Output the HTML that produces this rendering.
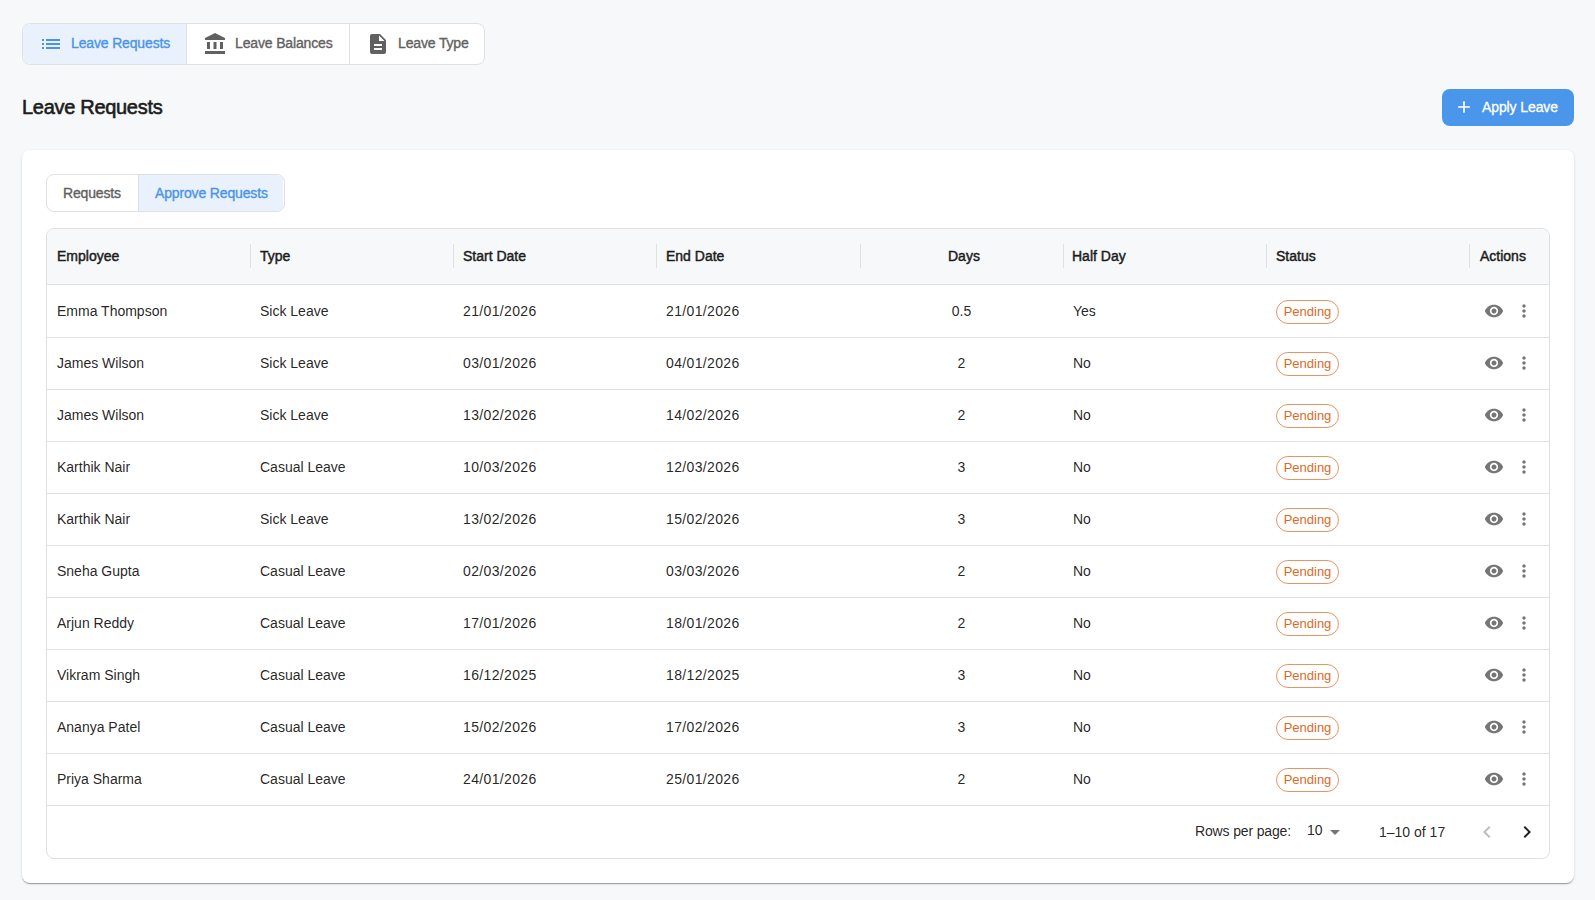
<!DOCTYPE html>
<html>
<head>
<meta charset="utf-8">
<style>
*{box-sizing:border-box;margin:0;padding:0}
html,body{width:1595px;height:900px;overflow:hidden}
body{background:#f7f8fa;font-family:"Liberation Sans",sans-serif;color:rgba(0,0,0,0.87);position:relative}
.abs{position:absolute}
svg{display:block}
/* top toggle group */
.tg{position:absolute;left:22px;top:23px;height:42px;width:463px;border:1px solid #e0e0e0;border-radius:8px;background:#fff;overflow:hidden;display:flex}
.tg .b{position:relative;flex:none;height:40px;font-size:14px;color:#616161;-webkit-text-stroke:0.35px currentColor;letter-spacing:-0.15px}
.tg .b.sel{background:#e8f1fc;color:#4a94e8}
.tg .b+.b{border-left:1px solid #e0e0e0}
.title{position:absolute;left:22px;top:94px;font-size:20px;color:#1c1c1c;-webkit-text-stroke:0.6px #1c1c1c;letter-spacing:-0.3px;line-height:26px}
.apply{position:absolute;left:1442px;top:89px;width:132px;height:37px;background:#4a96ea;border-radius:8px;color:#fff;font-size:14px;-webkit-text-stroke:0.3px #fff}
.card{position:absolute;left:22px;top:150px;width:1552px;height:733px;background:#fff;border-radius:8px;box-shadow:0px 2px 1px -1px rgba(0,0,0,0.2),0px 1px 1px 0px rgba(0,0,0,0.14),0px 1px 3px 0px rgba(0,0,0,0.12)}
.tabs{position:absolute;left:46px;top:174px;width:239px;height:38px;border:1px solid #e0e0e0;border-radius:8px;overflow:hidden;display:flex;background:#fff}
.tabs .b{flex:none;height:36px;display:flex;align-items:center;font-size:14px;color:#616161;-webkit-text-stroke:0.35px currentColor;letter-spacing:-0.15px}
.tabs .b.sel{background:#e8f1fc;color:#4a94e8}
.tabs .b+.b{border-left:1px solid #e0e0e0}
.grid{position:absolute;left:46px;top:228px;width:1504px;height:631px;border:1px solid #e0e0e0;border-radius:8px;overflow:hidden;background:#fff}
.hdr{position:absolute;left:0;top:0;width:1502px;height:56px;background:#f7f8fa;border-bottom:1px solid #e0e0e0}
.hc{position:absolute;top:0;height:55px;line-height:55px;font-size:14px;color:#1c1c1c;-webkit-text-stroke:0.45px #1c1c1c;white-space:nowrap}
.sep{position:absolute;top:15px;width:1px;height:24px;background:#e0e0e0}
.row{position:absolute;left:0;width:1502px;height:52px;border-top:1px solid #e0e0e0}
.row.first{border-top-color:transparent}
.d{letter-spacing:0.35px}
.c{position:absolute;top:-1px;height:52px;line-height:52px;font-size:14px;color:rgba(0,0,0,0.87);white-space:nowrap}
.chip{position:absolute;left:1229px;top:14px;width:63px;height:24px;border:1px solid rgba(222,108,40,0.72);border-radius:12px;color:#da6a28;font-size:13px;line-height:22px;text-align:center}
.eye{position:absolute;left:1437px;top:15px}
.more{position:absolute;left:1467px;top:15px}
.foot{position:absolute;left:0;top:576px;width:1502px;height:53px;border-top:1px solid #e0e0e0}
.ft{position:absolute;top:0;line-height:52px;font-size:14px;color:rgba(0,0,0,0.87);white-space:nowrap}
</style>
</head>
<body>

<div class="tg">
  <div class="b sel" style="width:163px">
    <svg class="abs" style="left:16px;top:8px" width="24" height="24" viewBox="0 0 24 24"><path fill="currentColor" d="M3 13h2v-2H3zm0 4h2v-2H3zm0-8h2V7H3zm4 4h14v-2H7zm0 4h14v-2H7zM7 7v2h14V7z"/></svg>
    <span class="abs" style="left:48px;top:10.5px;line-height:16px">Leave Requests</span>
  </div>
  <div class="b" style="width:163px">
    <svg class="abs" style="left:16px;top:8px" width="24" height="24" viewBox="0 0 24 24"><path fill="#616161" d="M4 10h3v7H4zm6.5 0h3v7h-3zM2 19h20v3H2zm15-9h3v7h-3zm-5-9L2 6v2h20V6z"/></svg>
    <span class="abs" style="left:48px;top:10.5px;line-height:16px">Leave Balances</span>
  </div>
  <div class="b" style="width:135px">
    <svg class="abs" style="left:16px;top:8px" width="24" height="24" viewBox="0 0 24 24"><path fill="#616161" d="M14 2H6c-1.1 0-1.99.9-1.99 2L4 20c0 1.1.89 2 1.99 2H18c1.1 0 2-.9 2-2V8zm2 16H8v-2h8zm0-4H8v-2h8zm-3-5V3.5L18.5 9z"/></svg>
    <span class="abs" style="left:48px;top:10.5px;line-height:16px">Leave Type</span>
  </div>
</div>

<div class="title">Leave Requests</div>

<div class="apply">
  <svg class="abs" style="left:12px;top:8px" width="20" height="20" viewBox="0 0 24 24"><path fill="#fff" d="M19 13h-6v6h-2v-6H5v-2h6V5h2v6h6z"/></svg>
  <span class="abs" style="left:40px;top:10px;line-height:16px;letter-spacing:-0.1px">Apply Leave</span>
</div>

<div class="card"></div>

<div class="tabs">
  <div class="b" style="width:91px"><span style="padding-left:16px">Requests</span></div>
  <div class="b sel" style="width:145px"><span style="padding-left:16px">Approve Requests</span></div>
</div>

<div class="grid" id="grid">
  <div class="hdr">
    <div class="hc" style="left:10px">Employee</div>
    <div class="hc" style="left:213px">Type</div>
    <div class="hc" style="left:416px">Start Date</div>
    <div class="hc" style="left:619px">End Date</div>
    <div class="hc" style="left:901px">Days</div>
    <div class="hc" style="left:1025px">Half Day</div>
    <div class="hc" style="left:1229px">Status</div>
    <div class="hc" style="left:1433px">Actions</div>
    <div class="sep" style="left:203px"></div>
    <div class="sep" style="left:406px"></div>
    <div class="sep" style="left:609px"></div>
    <div class="sep" style="left:813px"></div>
    <div class="sep" style="left:1016px"></div>
    <div class="sep" style="left:1219px"></div>
    <div class="sep" style="left:1422px"></div>
  </div>
  <div id="rows"><div class="row first" style="top:56px"><div class="c" style="left:10px">Emma Thompson</div><div class="c" style="left:213px">Sick Leave</div><div class="c d" style="left:416px">21/01/2026</div><div class="c d" style="left:619px">21/01/2026</div><div class="c" style="left:813px;width:203px;text-align:center">0.5</div><div class="c" style="left:1026px">Yes</div><div class="chip">Pending</div><svg class="eye" width="20" height="20" viewBox="0 0 24 24"><path fill="rgba(0,0,0,0.54)" d="M12 4.5C7 4.5 2.73 7.61 1 12c1.73 4.39 6 7.5 11 7.5s9.27-3.11 11-7.5c-1.73-4.39-6-7.5-11-7.5M12 17c-2.76 0-5-2.24-5-5s2.24-5 5-5 5 2.24 5 5-2.24 5-5 5m0-8c-1.66 0-3 1.34-3 3s1.34 3 3 3 3-1.34 3-3-1.34-3-3-3"/></svg><svg class="more" width="20" height="20" viewBox="0 0 24 24"><path fill="rgba(0,0,0,0.54)" d="M12 8c1.1 0 2-.9 2-2s-.9-2-2-2-2 .9-2 2 .9 2 2 2m0 2c-1.1 0-2 .9-2 2s.9 2 2 2 2-.9 2-2-.9-2-2-2m0 6c-1.1 0-2 .9-2 2s.9 2 2 2 2-.9 2-2-.9-2-2-2"/></svg></div>
<div class="row" style="top:108px"><div class="c" style="left:10px">James Wilson</div><div class="c" style="left:213px">Sick Leave</div><div class="c d" style="left:416px">03/01/2026</div><div class="c d" style="left:619px">04/01/2026</div><div class="c" style="left:813px;width:203px;text-align:center">2</div><div class="c" style="left:1026px">No</div><div class="chip">Pending</div><svg class="eye" width="20" height="20" viewBox="0 0 24 24"><path fill="rgba(0,0,0,0.54)" d="M12 4.5C7 4.5 2.73 7.61 1 12c1.73 4.39 6 7.5 11 7.5s9.27-3.11 11-7.5c-1.73-4.39-6-7.5-11-7.5M12 17c-2.76 0-5-2.24-5-5s2.24-5 5-5 5 2.24 5 5-2.24 5-5 5m0-8c-1.66 0-3 1.34-3 3s1.34 3 3 3 3-1.34 3-3-1.34-3-3-3"/></svg><svg class="more" width="20" height="20" viewBox="0 0 24 24"><path fill="rgba(0,0,0,0.54)" d="M12 8c1.1 0 2-.9 2-2s-.9-2-2-2-2 .9-2 2 .9 2 2 2m0 2c-1.1 0-2 .9-2 2s.9 2 2 2 2-.9 2-2-.9-2-2-2m0 6c-1.1 0-2 .9-2 2s.9 2 2 2 2-.9 2-2-.9-2-2-2"/></svg></div>
<div class="row" style="top:160px"><div class="c" style="left:10px">James Wilson</div><div class="c" style="left:213px">Sick Leave</div><div class="c d" style="left:416px">13/02/2026</div><div class="c d" style="left:619px">14/02/2026</div><div class="c" style="left:813px;width:203px;text-align:center">2</div><div class="c" style="left:1026px">No</div><div class="chip">Pending</div><svg class="eye" width="20" height="20" viewBox="0 0 24 24"><path fill="rgba(0,0,0,0.54)" d="M12 4.5C7 4.5 2.73 7.61 1 12c1.73 4.39 6 7.5 11 7.5s9.27-3.11 11-7.5c-1.73-4.39-6-7.5-11-7.5M12 17c-2.76 0-5-2.24-5-5s2.24-5 5-5 5 2.24 5 5-2.24 5-5 5m0-8c-1.66 0-3 1.34-3 3s1.34 3 3 3 3-1.34 3-3-1.34-3-3-3"/></svg><svg class="more" width="20" height="20" viewBox="0 0 24 24"><path fill="rgba(0,0,0,0.54)" d="M12 8c1.1 0 2-.9 2-2s-.9-2-2-2-2 .9-2 2 .9 2 2 2m0 2c-1.1 0-2 .9-2 2s.9 2 2 2 2-.9 2-2-.9-2-2-2m0 6c-1.1 0-2 .9-2 2s.9 2 2 2 2-.9 2-2-.9-2-2-2"/></svg></div>
<div class="row" style="top:212px"><div class="c" style="left:10px">Karthik Nair</div><div class="c" style="left:213px">Casual Leave</div><div class="c d" style="left:416px">10/03/2026</div><div class="c d" style="left:619px">12/03/2026</div><div class="c" style="left:813px;width:203px;text-align:center">3</div><div class="c" style="left:1026px">No</div><div class="chip">Pending</div><svg class="eye" width="20" height="20" viewBox="0 0 24 24"><path fill="rgba(0,0,0,0.54)" d="M12 4.5C7 4.5 2.73 7.61 1 12c1.73 4.39 6 7.5 11 7.5s9.27-3.11 11-7.5c-1.73-4.39-6-7.5-11-7.5M12 17c-2.76 0-5-2.24-5-5s2.24-5 5-5 5 2.24 5 5-2.24 5-5 5m0-8c-1.66 0-3 1.34-3 3s1.34 3 3 3 3-1.34 3-3-1.34-3-3-3"/></svg><svg class="more" width="20" height="20" viewBox="0 0 24 24"><path fill="rgba(0,0,0,0.54)" d="M12 8c1.1 0 2-.9 2-2s-.9-2-2-2-2 .9-2 2 .9 2 2 2m0 2c-1.1 0-2 .9-2 2s.9 2 2 2 2-.9 2-2-.9-2-2-2m0 6c-1.1 0-2 .9-2 2s.9 2 2 2 2-.9 2-2-.9-2-2-2"/></svg></div>
<div class="row" style="top:264px"><div class="c" style="left:10px">Karthik Nair</div><div class="c" style="left:213px">Sick Leave</div><div class="c d" style="left:416px">13/02/2026</div><div class="c d" style="left:619px">15/02/2026</div><div class="c" style="left:813px;width:203px;text-align:center">3</div><div class="c" style="left:1026px">No</div><div class="chip">Pending</div><svg class="eye" width="20" height="20" viewBox="0 0 24 24"><path fill="rgba(0,0,0,0.54)" d="M12 4.5C7 4.5 2.73 7.61 1 12c1.73 4.39 6 7.5 11 7.5s9.27-3.11 11-7.5c-1.73-4.39-6-7.5-11-7.5M12 17c-2.76 0-5-2.24-5-5s2.24-5 5-5 5 2.24 5 5-2.24 5-5 5m0-8c-1.66 0-3 1.34-3 3s1.34 3 3 3 3-1.34 3-3-1.34-3-3-3"/></svg><svg class="more" width="20" height="20" viewBox="0 0 24 24"><path fill="rgba(0,0,0,0.54)" d="M12 8c1.1 0 2-.9 2-2s-.9-2-2-2-2 .9-2 2 .9 2 2 2m0 2c-1.1 0-2 .9-2 2s.9 2 2 2 2-.9 2-2-.9-2-2-2m0 6c-1.1 0-2 .9-2 2s.9 2 2 2 2-.9 2-2-.9-2-2-2"/></svg></div>
<div class="row" style="top:316px"><div class="c" style="left:10px">Sneha Gupta</div><div class="c" style="left:213px">Casual Leave</div><div class="c d" style="left:416px">02/03/2026</div><div class="c d" style="left:619px">03/03/2026</div><div class="c" style="left:813px;width:203px;text-align:center">2</div><div class="c" style="left:1026px">No</div><div class="chip">Pending</div><svg class="eye" width="20" height="20" viewBox="0 0 24 24"><path fill="rgba(0,0,0,0.54)" d="M12 4.5C7 4.5 2.73 7.61 1 12c1.73 4.39 6 7.5 11 7.5s9.27-3.11 11-7.5c-1.73-4.39-6-7.5-11-7.5M12 17c-2.76 0-5-2.24-5-5s2.24-5 5-5 5 2.24 5 5-2.24 5-5 5m0-8c-1.66 0-3 1.34-3 3s1.34 3 3 3 3-1.34 3-3-1.34-3-3-3"/></svg><svg class="more" width="20" height="20" viewBox="0 0 24 24"><path fill="rgba(0,0,0,0.54)" d="M12 8c1.1 0 2-.9 2-2s-.9-2-2-2-2 .9-2 2 .9 2 2 2m0 2c-1.1 0-2 .9-2 2s.9 2 2 2 2-.9 2-2-.9-2-2-2m0 6c-1.1 0-2 .9-2 2s.9 2 2 2 2-.9 2-2-.9-2-2-2"/></svg></div>
<div class="row" style="top:368px"><div class="c" style="left:10px">Arjun Reddy</div><div class="c" style="left:213px">Casual Leave</div><div class="c d" style="left:416px">17/01/2026</div><div class="c d" style="left:619px">18/01/2026</div><div class="c" style="left:813px;width:203px;text-align:center">2</div><div class="c" style="left:1026px">No</div><div class="chip">Pending</div><svg class="eye" width="20" height="20" viewBox="0 0 24 24"><path fill="rgba(0,0,0,0.54)" d="M12 4.5C7 4.5 2.73 7.61 1 12c1.73 4.39 6 7.5 11 7.5s9.27-3.11 11-7.5c-1.73-4.39-6-7.5-11-7.5M12 17c-2.76 0-5-2.24-5-5s2.24-5 5-5 5 2.24 5 5-2.24 5-5 5m0-8c-1.66 0-3 1.34-3 3s1.34 3 3 3 3-1.34 3-3-1.34-3-3-3"/></svg><svg class="more" width="20" height="20" viewBox="0 0 24 24"><path fill="rgba(0,0,0,0.54)" d="M12 8c1.1 0 2-.9 2-2s-.9-2-2-2-2 .9-2 2 .9 2 2 2m0 2c-1.1 0-2 .9-2 2s.9 2 2 2 2-.9 2-2-.9-2-2-2m0 6c-1.1 0-2 .9-2 2s.9 2 2 2 2-.9 2-2-.9-2-2-2"/></svg></div>
<div class="row" style="top:420px"><div class="c" style="left:10px">Vikram Singh</div><div class="c" style="left:213px">Casual Leave</div><div class="c d" style="left:416px">16/12/2025</div><div class="c d" style="left:619px">18/12/2025</div><div class="c" style="left:813px;width:203px;text-align:center">3</div><div class="c" style="left:1026px">No</div><div class="chip">Pending</div><svg class="eye" width="20" height="20" viewBox="0 0 24 24"><path fill="rgba(0,0,0,0.54)" d="M12 4.5C7 4.5 2.73 7.61 1 12c1.73 4.39 6 7.5 11 7.5s9.27-3.11 11-7.5c-1.73-4.39-6-7.5-11-7.5M12 17c-2.76 0-5-2.24-5-5s2.24-5 5-5 5 2.24 5 5-2.24 5-5 5m0-8c-1.66 0-3 1.34-3 3s1.34 3 3 3 3-1.34 3-3-1.34-3-3-3"/></svg><svg class="more" width="20" height="20" viewBox="0 0 24 24"><path fill="rgba(0,0,0,0.54)" d="M12 8c1.1 0 2-.9 2-2s-.9-2-2-2-2 .9-2 2 .9 2 2 2m0 2c-1.1 0-2 .9-2 2s.9 2 2 2 2-.9 2-2-.9-2-2-2m0 6c-1.1 0-2 .9-2 2s.9 2 2 2 2-.9 2-2-.9-2-2-2"/></svg></div>
<div class="row" style="top:472px"><div class="c" style="left:10px">Ananya Patel</div><div class="c" style="left:213px">Casual Leave</div><div class="c d" style="left:416px">15/02/2026</div><div class="c d" style="left:619px">17/02/2026</div><div class="c" style="left:813px;width:203px;text-align:center">3</div><div class="c" style="left:1026px">No</div><div class="chip">Pending</div><svg class="eye" width="20" height="20" viewBox="0 0 24 24"><path fill="rgba(0,0,0,0.54)" d="M12 4.5C7 4.5 2.73 7.61 1 12c1.73 4.39 6 7.5 11 7.5s9.27-3.11 11-7.5c-1.73-4.39-6-7.5-11-7.5M12 17c-2.76 0-5-2.24-5-5s2.24-5 5-5 5 2.24 5 5-2.24 5-5 5m0-8c-1.66 0-3 1.34-3 3s1.34 3 3 3 3-1.34 3-3-1.34-3-3-3"/></svg><svg class="more" width="20" height="20" viewBox="0 0 24 24"><path fill="rgba(0,0,0,0.54)" d="M12 8c1.1 0 2-.9 2-2s-.9-2-2-2-2 .9-2 2 .9 2 2 2m0 2c-1.1 0-2 .9-2 2s.9 2 2 2 2-.9 2-2-.9-2-2-2m0 6c-1.1 0-2 .9-2 2s.9 2 2 2 2-.9 2-2-.9-2-2-2"/></svg></div>
<div class="row" style="top:524px"><div class="c" style="left:10px">Priya Sharma</div><div class="c" style="left:213px">Casual Leave</div><div class="c d" style="left:416px">24/01/2026</div><div class="c d" style="left:619px">25/01/2026</div><div class="c" style="left:813px;width:203px;text-align:center">2</div><div class="c" style="left:1026px">No</div><div class="chip">Pending</div><svg class="eye" width="20" height="20" viewBox="0 0 24 24"><path fill="rgba(0,0,0,0.54)" d="M12 4.5C7 4.5 2.73 7.61 1 12c1.73 4.39 6 7.5 11 7.5s9.27-3.11 11-7.5c-1.73-4.39-6-7.5-11-7.5M12 17c-2.76 0-5-2.24-5-5s2.24-5 5-5 5 2.24 5 5-2.24 5-5 5m0-8c-1.66 0-3 1.34-3 3s1.34 3 3 3 3-1.34 3-3-1.34-3-3-3"/></svg><svg class="more" width="20" height="20" viewBox="0 0 24 24"><path fill="rgba(0,0,0,0.54)" d="M12 8c1.1 0 2-.9 2-2s-.9-2-2-2-2 .9-2 2 .9 2 2 2m0 2c-1.1 0-2 .9-2 2s.9 2 2 2 2-.9 2-2-.9-2-2-2m0 6c-1.1 0-2 .9-2 2s.9 2 2 2 2-.9 2-2-.9-2-2-2"/></svg></div></div><!--/rows-->
  <div class="foot">
    <div class="ft" style="left:1148px;top:-1px;letter-spacing:-0.15px">Rows per page:</div>
    <div class="ft" style="left:1260px;top:-2px">10</div>
    <svg class="abs" style="left:1276px;top:14px" width="24" height="24" viewBox="0 0 24 24"><path fill="rgba(0,0,0,0.54)" d="M7 10l5 5 5-5z"/></svg>
    <div class="ft" style="left:1332px">1–10 of 17</div>
    <svg class="abs" style="left:1428px;top:14px" width="24" height="24" viewBox="0 0 24 24"><path fill="rgba(0,0,0,0.26)" d="M15.41 7.41 14 6l-6 6 6 6 1.41-1.41L10.83 12z"/></svg>
    <svg class="abs" style="left:1468px;top:14px" width="24" height="24" viewBox="0 0 24 24"><path fill="rgba(0,0,0,0.87)" d="M10 6 8.59 7.41 13.17 12l-4.58 4.59L10 18l6-6z"/></svg>
  </div>
</div>

</body>
</html>
